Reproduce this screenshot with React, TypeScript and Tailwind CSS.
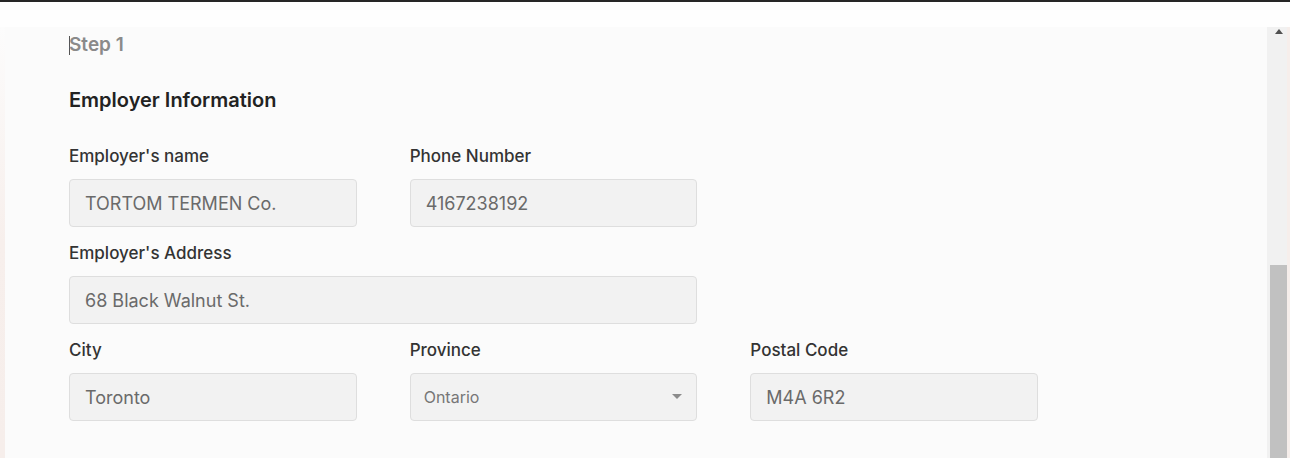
const font = { fontFamily: "Inter, 'Open Sans', sans-serif" };

function Field({ label, value, wide }: { label: string; value: string; wide?: boolean }) {
  return (
    <div className={wide ? "col-span-2" : ""}>
      <div className="h-[20px] text-[17px] leading-[20px] font-medium text-[#333]">{label}</div>
      <div className="mt-[13px] flex h-[48px] items-center rounded-[4px] border border-[#dedede] bg-[#f2f2f2] px-[15px] text-[18px] text-[#6a6a6a]">
        {value}
      </div>
    </div>
  );
}

export default function App() {
  return (
    <div className="h-[458px] w-[1290px] overflow-hidden bg-[#fdfdfd]" style={font}>
      <div className="h-[2px] bg-[#262626]" />
      <div className="h-[25px] bg-[#fefefe]" />
      <div className="flex h-[431px]">
        <div className="w-[5px] bg-gradient-to-b from-[#fcfcfc] via-[#f7efec] to-[#f6eeeb]" />
        {/* form panel */}
        <div className="flex-1 bg-[#fbfbfb] pl-[64px] pt-[6px]">
          <div className="flex h-[24px] items-center text-[19px] font-semibold text-[#8a8a8a]">
            <span className="mr-[-1px] h-[19px] w-[1px] bg-[#555]" />
            Step 1
          </div>
          <div className="mt-[31px] h-[24px] text-[20px] leading-[24px] font-semibold text-[#222]">Employer Information</div>
          <div className="mt-[34px] grid w-[969px] grid-cols-3 gap-x-[53px] gap-y-[16px]">
            <Field label="Employer's name" value="TORTOM TERMEN Co." />
            <Field label="Phone Number" value="4167238192" />
            <div />
            <Field label="Employer's Address" value="68 Black Walnut St." wide />
            <div />
            <Field label="City" value="Toronto" />
            <div>
              <div className="h-[20px] text-[17px] leading-[20px] font-medium text-[#333]">Province</div>
              <div className="mt-[13px] flex h-[48px] items-center justify-between rounded-[4px] border border-[#dedede] bg-[#f2f2f2] pl-[13px] pr-[14px] text-[16px] text-[#777]">
                Ontario
                <svg width="10" height="6" viewBox="0 0 10 6">
                  <path d="M0 0h10L5 5z" fill="#8c8c8c" />
                </svg>
              </div>
            </div>
            <Field label="Postal Code" value="M4A 6R2" />
          </div>
        </div>
        {/* scrollbar */}
        <div className="flex w-[20px] flex-col bg-[#f1f1f1] pl-[3px]">
          <div className="flex h-[238px] justify-center pt-[2px]">
            <svg width="8" height="5" viewBox="0 0 8 5">
              <path d="M0 5L4 0l4 5z" fill="#505050" />
            </svg>
          </div>
          <div className="flex-1 bg-[#c1c1c1]" />
        </div>
        <div className="w-[3px] bg-[#f6eeeb]" />
      </div>
    </div>
  );
}
